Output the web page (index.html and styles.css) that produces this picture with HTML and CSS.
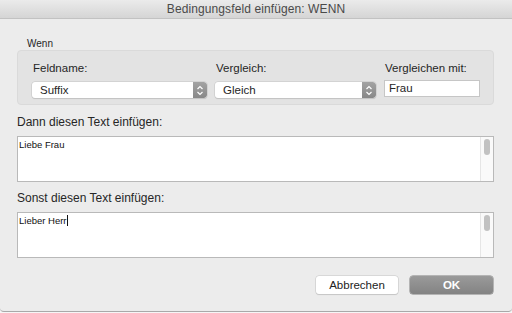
FILE: index.html
```html
<!DOCTYPE html>
<html lang="de">
<head>
  <meta charset="UTF-8" />
  <title>Bedingungsfeld einfügen: WENN</title>
  <link rel="stylesheet" href="styles.css">
</head>
<body>

  <div class="window">
    <div class="titlebar">Bedingungsfeld einfügen: WENN</div>

    <div class="content">
      <div class="group-title">Wenn</div>
      <div class="group">
        <div class="field-label">Feldname:</div>
        <div class="field-label">Vergleich:</div>
        <div class="field-label">Vergleichen mit:</div>

        <div class="select">
          <span class="select-value">Suffix</span>
          <span class="select-arrows">
            <svg width="8" height="11" viewBox="0 0 8 11"><path d="M1.5 4 L4 1.5 L6.5 4 M1.5 7 L4 9.5 L6.5 7" fill="none" stroke="#fff" stroke-width="1.2"/></svg>
          </span>
        </div>
        <div class="select">
          <span class="select-value">Gleich</span>
          <span class="select-arrows">
            <svg width="8" height="11" viewBox="0 0 8 11"><path d="M1.5 4 L4 1.5 L6.5 4 M1.5 7 L4 9.5 L6.5 7" fill="none" stroke="#fff" stroke-width="1.2"/></svg>
          </span>
        </div>
        <div class="text-input">Frau</div>
      </div>

      <div class="section-label">Dann diesen Text einfügen:</div>
      <div class="text-box">
        <div class="text-body">Liebe Frau</div>
        <div class="scroll-track"><div class="scroll-thumb"></div></div>
      </div>

      <div class="section-label">Sonst diesen Text einfügen:</div>
      <div class="text-box">
        <div class="text-body">Lieber Herr<span class="caret"></span></div>
        <div class="scroll-track"><div class="scroll-thumb"></div></div>
      </div>

      <div class="buttons">
        <button class="btn cancel">Abbrechen</button>
        <button class="btn ok">OK</button>
      </div>
    </div>
  </div>

</body>
</html>
```

FILE: styles.css
```css
body {
  margin: 0;
  background: #f6f6f6;
  font-family: "Liberation Sans", Arial, sans-serif;
  color: #262626;
}

.window {
  width: 512px;
  height: 311px;
  background: #ececec;
  border-bottom: 1px solid #a9a9a9;
  border-radius: 0 0 4px 4px;
  overflow: hidden;
}

.titlebar {
  height: 18px;
  line-height: 19px;
  text-align: center;
  font-size: 12px;
  letter-spacing: 0.1px;
  color: #4a4a4a;
  background: linear-gradient(#ebebeb, #d5d5d5);
  border-bottom: 1px solid #c2c2c2;
}

.content {
  padding: 0 18px 0 17px;
}

.group-title {
  margin: 19px 0 0 10px;
  font-size: 10px;
  line-height: 12px;
}

.group {
  height: 55px;
  box-sizing: border-box;
  padding: 10px 15px 0 14px;
  background: #e3e3e3;
  border: 1px solid #dadada;
  border-radius: 4px;
  display: grid;
  grid-template-columns: 175px 161px 96px;
  column-gap: 8px;
  row-gap: 7px;
  align-content: start;
}

.field-label {
  font-size: 11.5px;
  line-height: 14px;
  padding-left: 1px;
}

.select {
  height: 16px;
  display: flex;
  background: #fff;
  border-radius: 3px;
  box-shadow: 0 0 0 0.5px #c4c4c4, 0 1px 1px rgba(0,0,0,0.15);
  overflow: hidden;
}

.select-value {
  flex: 1;
  padding-left: 8px;
  font-size: 11.5px;
  line-height: 16px;
}

.select-arrows {
  width: 14px;
  display: flex;
  align-items: center;
  justify-content: center;
  background: linear-gradient(#a3a3a3, #888);
  border-radius: 0 3px 3px 0;
}

.text-input {
  height: 17px;
  margin-top: -2px;
  box-sizing: border-box;
  padding-left: 4px;
  background: #fff;
  border: 1px solid #c6c6c6;
  font-size: 11.5px;
  line-height: 15px;
}

.section-label {
  margin-top: 10px;
  font-size: 12px;
  line-height: 14px;
}

.section-label + .text-box {
  margin-top: 7px;
}

.text-box + .section-label {
  margin-top: 9px;
}

.text-box {
  height: 46px;
  box-sizing: border-box;
  display: flex;
  background: #fff;
  border: 1px solid #b9b9b9;
}

.text-body {
  flex: 1;
  padding: 2px 1px;
  font-size: 9.5px;
  line-height: 11px;
  color: #111;
}

.caret {
  display: inline-block;
  width: 1px;
  height: 11px;
  vertical-align: -2px;
  background: #111;
}

.scroll-track {
  width: 12px;
  background: #fafafa;
  border-left: 1px solid #e6e6e6;
  display: flex;
  justify-content: center;
  padding-top: 2px;
}

.scroll-thumb {
  width: 6px;
  height: 16px;
  background: #c2c2c2;
  border-radius: 3px;
}

.buttons {
  margin-top: 18px;
  display: flex;
  justify-content: flex-end;
  gap: 12px;
  padding-right: 1px;
}

.btn {
  height: 18px;
  padding: 0;
  border: none;
  border-radius: 3px;
  font-family: "Liberation Sans", Arial, sans-serif;
  font-size: 11.5px;
  line-height: 18px;
}

.cancel {
  width: 82px;
  background: #fff;
  color: #222;
  box-shadow: 0 0 0 0.5px #c4c4c4, 0 1px 1px rgba(0,0,0,0.15);
}

.ok {
  width: 83px;
  background: linear-gradient(#9a9a9a, #838383);
  color: #fff;
  font-weight: bold;
  box-shadow: 0 0 0 0.5px #7c7c7c;
}
```
